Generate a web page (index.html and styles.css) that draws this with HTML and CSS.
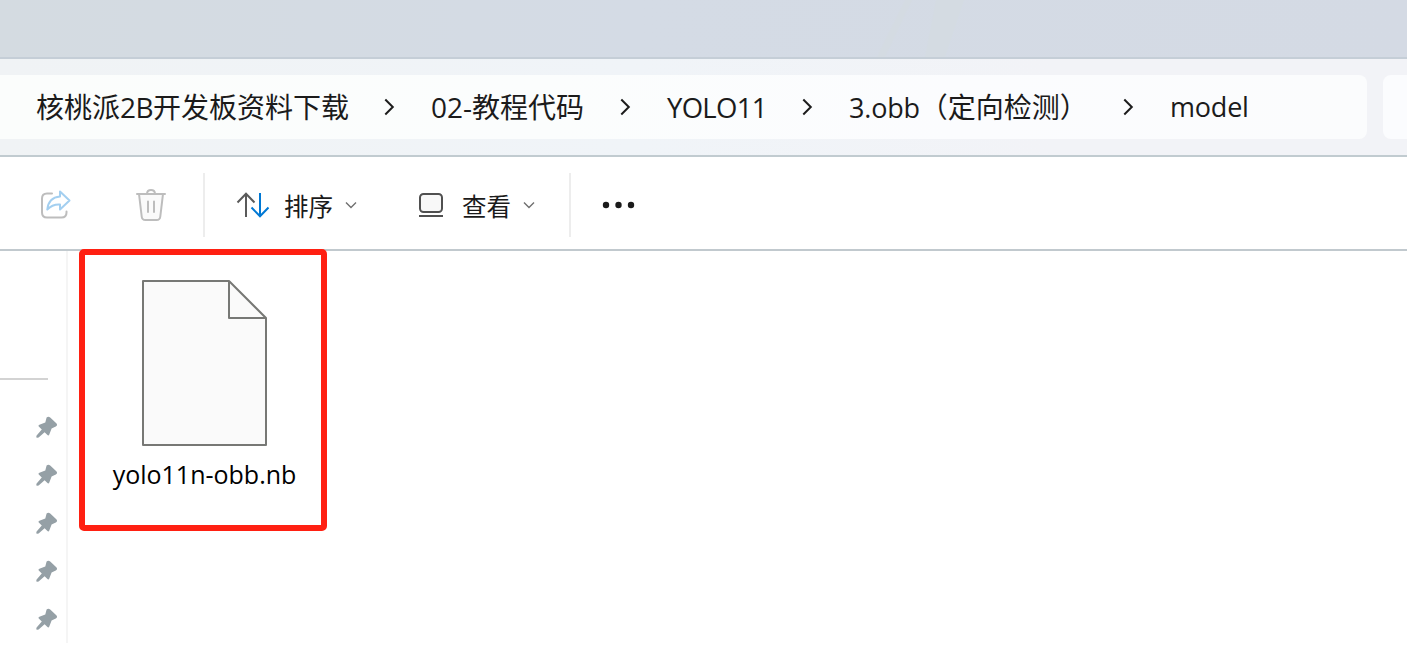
FILE: index.html
```html
<!DOCTYPE html>
<html lang="zh-CN">
<head>
<meta charset="utf-8">
<title>model</title>
<link rel="stylesheet" href="styles.css">
</head>
<body>
<svg class="defs" width="0" height="0">
  <symbol id="chev" viewBox="0 0 12 20"><path d="M2.300 2.500 9.800 10 2.300 17.500" fill="none" stroke="#1c1c1c" stroke-width="2"/></symbol>
  <symbol id="down" viewBox="0 0 12 8"><path d="M1 1.500 6 6.600 11 1.500" fill="none" stroke="#707070" stroke-width="1.400"/></symbol>
  <symbol id="pin" viewBox="0 0 22 22"><path d="M10.600 1.600Q12.300-.2 14.200 1.500L20.300 7.300Q22 9.200 19.800 10.500L15.600 12.400 13.300 18.400Q12.600 20.200 11.200 18.800L8.600 16.200 2.600 21.500Q.8 21.800.5 21.400.1 21 .6 19.600L5.800 13.500 3 10.700Q1.800 9.500 3.400 8.800L9.300 6.400Z" fill="#95a0a6"/></symbol>
</svg>
<div class="window">
  <header class="titlebar"><svg width="1407" height="57"><path d="M905 0h7L885 57h-8z" fill="#d4dbe2"/><path d="M936 0h28L945 57h-20z" fill="#d4dbe2"/></svg></header>
  <div class="addressbar">
    <nav class="path">
      <span class="crumb c1">核桃派<span class="num">2B</span>开发板资料下载</span><svg class="chev"><use href="#chev"/></svg>
      <span class="crumb c2">02-教程代码</span><svg class="chev"><use href="#chev"/></svg>
      <span class="crumb c3"><span class="caps">YOLO11</span></span><svg class="chev"><use href="#chev"/></svg>
      <span class="crumb c4"><span class="latin">3.obb</span>（定向检测）</span><svg class="chev"><use href="#chev"/></svg>
      <span class="crumb c5"><span class="latin">model</span></span>
    </nav>
    <div class="search"></div>
  </div>
  <div class="toolbar">
    <svg class="share" width="32" height="32" viewBox="0 0 32 32" fill="none" stroke-width="2" stroke-linejoin="round" stroke-linecap="round"><path d="M12 4.500H7Q2 4.500 2 9.500V23.500Q2 28.500 7 28.500H21.500Q26.500 28.500 26.500 23.500V22.500" stroke="#bdbdbd"/><path d="M20 2.500 29.500 11.500 20 20.500V15.500Q12.500 15 7.300 20.500 8.500 8.500 20 7.500Z" stroke="#a3cff0"/></svg>
    <svg class="trash" width="32" height="34" viewBox="0 0 32 34" fill="none" stroke="#bdbdbd" stroke-width="2" stroke-linecap="round" stroke-linejoin="round"><path d="M4 6 6.700 28.500Q7 32 10.500 32H21.500Q25 32 25.300 28.500L28 6Z" fill="#fafafa"/><path d="M2 6H30M12 5.500Q12.300 2 16 2T20 5.500M13 13.500V24M19 13.500V24"/></svg>
    <i class="rule r1"></i>
    <svg class="sort" width="34" height="26" viewBox="0 0 34 26" fill="none" stroke-width="2"><path d="M10 25V2M1.500 10.500 10 1.800 18.500 10.500" stroke="#5a5a5a"/><path d="M24 1V24M15.500 15.500 24 24.200 32.500 15.500" stroke="#0078d4"/></svg>
    <span class="label l1">排序</span><svg class="down"><use href="#down"/></svg>
    <svg class="view" width="26" height="26" viewBox="0 0 26 26" stroke="#505050" stroke-width="2"><rect x="2" y="2" width="22" height="18" rx="3.500" fill="#f8f8f8"/><path d="M1 24H25"/></svg>
    <span class="label l2">查看</span><svg class="down"><use href="#down"/></svg>
    <i class="rule r2"></i>
    <svg class="more" width="34" height="8" viewBox="0 0 34 8" fill="#1a1a1a"><circle cx="4" cy="4" r="3.200"/><circle cx="16.500" cy="4" r="3.200"/><circle cx="29" cy="4" r="3.200"/></svg>
  </div>
  <div class="body">
    <aside class="sidebar">
      <div class="sep"></div>
      <svg class="pin"><use href="#pin"/></svg><svg class="pin"><use href="#pin"/></svg><svg class="pin"><use href="#pin"/></svg><svg class="pin"><use href="#pin"/></svg><svg class="pin"><use href="#pin"/></svg>
    </aside>
    <main class="files">
      <div class="file">
        <svg width="126" height="168" viewBox="0 0 126 168" fill="#fafafa" stroke="#777875" stroke-width="2" stroke-linejoin="round"><path d="M2 2H88L125 39V166H2Z"/><path d="M88 2V39H125" fill="none"/></svg>
        <span class="name">yolo11n-obb.nb</span>
      </div>
      <div class="highlight"></div>
    </main>
  </div>
</div>
</body>
</html>
```
FILE: styles.css
```css
* { box-sizing: border-box; }
body { margin: 0; background: #fff; font-family: "Open Sans", "Noto Sans CJK SC", sans-serif; color: #1b1b1b; }
svg { display: block; flex: none; }
.defs { position: absolute; }
.window { width: 1407px; height: 645px; overflow: hidden; display: flex; flex-direction: column; }
.titlebar { height: 59px; flex: none; background: linear-gradient(90deg, #d4dbe1, #d4dbe5 45%, #d4dae4); border-bottom: 2px solid #c5ced7; }
.addressbar { height: 98px; flex: none; display: flex; gap: 16px; padding: 16px 0; background: linear-gradient(90deg, #f0f3f5, #f0f4f8 45%, #f2f3f7 75%); border-bottom: 2px solid #c1cbd0; }
.path { width: 1367px; flex: none; height: 64px; padding-left: 36px; display: flex; align-items: center; background: linear-gradient(90deg, #fbfdfc, #fbfdfd 40%, #fbfcfe 70%, #fbfcfd); border-radius: 0 8px 8px 0; }
.search { flex: 1; height: 64px; background: #fbfcfe; border-radius: 8px 0 0 8px; }
.crumb { flex: none; font-size: 28px; line-height: 40px; white-space: nowrap; }
.num { letter-spacing: -0.6px; }
.caps { font-size: 27.5px; letter-spacing: -0.7px; }
.latin { font-size: 27px; letter-spacing: -0.2px; }
.c1 { width: 347px; }
.c2 { width: 188px; }
.c3 { width: 134px; }
.c4 { width: 273px; }
.c5 { padding-bottom: 1px; }
.chev { width: 12px; height: 20px; margin-right: 36px; }
.toolbar { height: 94px; flex: none; display: flex; align-items: center; padding-top: 4px; border-bottom: 2px solid #c1c9ce; }
.share { margin-left: 40px; }
.trash { margin-left: 63px; }
.rule { width: 2px; height: 64px; background: #ededed; flex: none; }
.r1 { margin-left: 36px; }
.sort { margin-left: 31px; }
.label { width: 50px; padding-top: 4px; font-size: 24.5px; line-height: 36px; white-space: nowrap; flex: none; }
.l1 { margin-left: 14px; }
.l2 { margin-left: 18px; }
.down { width: 12px; height: 8px; margin-left: 11px; }
.view { margin-left: 61px; }
.r2 { margin-left: 34px; }
.more { margin-left: 31px; }
.body { flex: 1; display: flex; }
.sidebar { width: 68px; height: 392px; border-right: 2px solid #f5f5f5; }
.sep { width: 48px; height: 2px; margin: 127px 0 36px; background: #d3d3d3; }
.pin { width: 22px; height: 22px; margin: 0 0 26px 36px; }
.files { position: relative; flex: 1; padding: 28px 0 0 32px; }
.file { width: 208px; display: flex; flex-direction: column; align-items: center; }
.name { margin-top: 9px; padding-left: 1px; font-size: 25px; line-height: 36px; color: #000; white-space: nowrap; }
.highlight { position: absolute; left: 11px; top: -2px; width: 248px; height: 282px; border: 6px solid #ff2012; border-radius: 5px; }
```
